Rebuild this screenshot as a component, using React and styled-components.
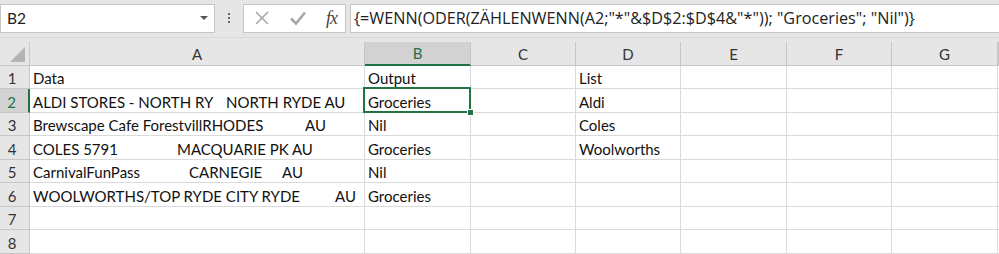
import React from "react";
import styled, { createGlobalStyle, css } from "styled-components";

const GlobalStyle = createGlobalStyle`
  body {
    margin: 0;
    background: #ffffff;
    font-family: Lato, "Open Sans", sans-serif;
  }
`;

const GREEN = "#217346";
const GRID = "#dadada";
const HEAD_LINE = "#c6c6c6";

const columns = [
  { name: "A", width: 335 },
  { name: "B", width: 106 },
  { name: "C", width: 105 },
  { name: "D", width: 105 },
  { name: "E", width: 106 },
  { name: "F", width: 105 },
  { name: "G", width: 106 },
];

// column A holds padded text, kept as segments with the width each one takes
const rows = [
  [[["Data"]], "Output", "", "List"],
  [[["ALDI STORES - NORTH RY", 193], ["NORTH RYDE AU"]], "Groceries", "", "Aldi"],
  [[["Brewscape Cafe ForestvillRHODES", 272], ["AU"]], "Nil", "", "Coles"],
  [[["COLES 5791", 144], ["MACQUARIE PK AU"]], "Groceries", "", "Woolworths"],
  [[["CarnivalFunPass", 156], ["CARNEGIE", 93], ["AU"]], "Nil", "", ""],
  [[["WOOLWORTHS/TOP RYDE CITY RYDE", 302], ["AU"]], "Groceries", "", ""],
  [[], "", "", ""],
  [[], "", "", ""],
];

const gridTemplate = `30px ${columns.map((c) => c.width + "px").join(" ")} 1fr`;

const Sheet = styled.div`
  width: 999px;
  height: 254px;
  overflow: hidden;
  background: #ffffff;
`;

const Toolbar = styled.div`
  display: flex;
  align-items: center;
  height: 36px;
  padding-bottom: 1px;
  background: #e6e6e6;
  border-bottom: 1px solid #d9d9d9;
`;

const NameBox = styled.div`
  box-sizing: border-box;
  display: flex;
  align-items: center;
  justify-content: space-between;
  width: 215px;
  height: 29px;
  padding: 0 6px 0 6px;
  background: #ffffff;
  border: 1px solid #c6c6c6;
  font-size: 15.5px;
  color: #222;
`;

const Caret = styled.span`
  width: 0;
  height: 0;
  border-left: 4px solid transparent;
  border-right: 4px solid transparent;
  border-top: 4px solid #555;
`;

const Dots = styled.div`
  display: flex;
  flex-direction: column;
  align-items: center;
  gap: 2px;
  width: 28px;

  span {
    width: 2px;
    height: 2px;
    background: #666;
  }
`;

const FxBox = styled.div`
  box-sizing: border-box;
  display: flex;
  align-items: center;
  justify-content: space-between;
  width: 103px;
  height: 29px;
  padding: 0 8px 0 10px;
  background: #ffffff;
  border: 1px solid #c6c6c6;
`;

const Fx = styled.span`
  font-family: "Liberation Serif", "DejaVu Serif", serif;
  font-style: italic;
  font-size: 18px;
  color: #444;
  letter-spacing: -1px;
`;

const FormulaBox = styled.div`
  box-sizing: border-box;
  flex: 1;
  display: flex;
  align-items: center;
  height: 29px;
  margin-left: 4px;
  padding-left: 3px;
  background: #ffffff;
  border: 1px solid #c6c6c6;
  border-right: none;
  font-family: "Open Sans", sans-serif;
  font-size: 16.2px;
  color: #222;
  white-space: pre;
`;

const HeaderBar = styled.div`
  display: grid;
  grid-template-columns: ${gridTemplate};
  padding-top: 4px;
  background: #e6e6e6;
`;

const Corner = styled.div`
  position: relative;
  height: 23px;
  border-right: 1px solid ${HEAD_LINE};
  border-bottom: 1px solid ${HEAD_LINE};

  &::after {
    content: "";
    position: absolute;
    right: 4px;
    bottom: 3px;
    width: 0;
    height: 0;
    border-left: 15px solid transparent;
    border-bottom: 15px solid #b4b4b4;
  }
`;

const ColHead = styled.div`
  box-sizing: border-box;
  display: flex;
  align-items: center;
  justify-content: center;
  height: 24px;
  font-size: 15px;
  color: #333;
  border-right: 1px solid ${HEAD_LINE};
  border-bottom: 1px solid ${HEAD_LINE};

  ${(p) =>
    p.$active &&
    css`
      background: #d2d2d2;
      color: ${GREEN};
      border-bottom: 2px solid ${GREEN};
    `}
`;

const Grid = styled.div`
  display: grid;
  grid-template-columns: ${gridTemplate};
  grid-auto-rows: 23.45px;
`;

const RowHead = styled.div`
  box-sizing: border-box;
  display: flex;
  align-items: flex-end;
  justify-content: center;
  padding: 0 5px 1px 0;
  background: #e6e6e6;
  font-size: 15px;
  color: #333;
  border-right: 1px solid ${HEAD_LINE};
  border-bottom: 1px solid ${HEAD_LINE};

  ${(p) =>
    p.$active &&
    css`
      background: #d2d2d2;
      color: ${GREEN};
      border-right: 2px solid ${GREEN};
    `}
`;

const Cell = styled.div`
  box-sizing: border-box;
  position: relative;
  display: flex;
  align-items: flex-end;
  padding: 0 0 1px 3px;
  font-size: 15px;
  color: #111;
  white-space: pre;
  border-right: 1px solid ${GRID};
  border-bottom: 1px solid ${GRID};

  ${(p) =>
    p.$selected &&
    css`
      &::before {
        content: "";
        position: absolute;
        left: -2px;
        top: -2px;
        right: -1px;
        bottom: -1px;
        border: 2px solid ${GREEN};
      }
      &::after {
        content: "";
        position: absolute;
        right: -4px;
        bottom: -4px;
        width: 5px;
        height: 5px;
        background: ${GREEN};
        border: 1px solid #ffffff;
        z-index: 2;
      }
    `}
`;

const Segment = styled.span`
  flex: none;
  width: ${(p) => (p.$width ? p.$width + "px" : "auto")};
`;

export default function App() {
  return (
    <Sheet>
      <GlobalStyle />
      <Toolbar>
        <NameBox>
          B2
          <Caret />
        </NameBox>
        <Dots>
          <span />
          <span />
          <span />
        </Dots>
        <FxBox>
          <svg width="16" height="16" viewBox="0 0 16 16">
            <path d="M2 2 L14 14 M14 2 L2 14" stroke="#a8a8a8" strokeWidth="1.6" fill="none" />
          </svg>
          <svg width="18" height="16" viewBox="0 0 18 16">
            <path d="M2 8.5 L7 13.5 L16 2.5" stroke="#a8a8a8" strokeWidth="2.6" fill="none" />
          </svg>
          <Fx>fx</Fx>
        </FxBox>
        <FormulaBox>
          {'{=WENN(ODER(ZÄHLENWENN(A2;"*"&$D$2:$D$4&"*")); "Groceries"; "Nil")}'}
        </FormulaBox>
      </Toolbar>
      <HeaderBar>
        <Corner />
        {columns.map((c) => (
          <ColHead key={c.name} $active={c.name === "B"}>
            {c.name}
          </ColHead>
        ))}
        <ColHead />
      </HeaderBar>
      <Grid>
        {rows.map((r, i) => (
          <React.Fragment key={i}>
            <RowHead $active={i === 1}>{i + 1}</RowHead>
            {columns.map((c, j) => (
              <Cell key={c.name} $selected={i === 1 && j === 1}>
                {j === 0
                  ? r[0].map(([text, width]) => (
                      <Segment key={text} $width={width}>
                        {text}
                      </Segment>
                    ))
                  : r[j] || ""}
              </Cell>
            ))}
            <Cell />
          </React.Fragment>
        ))}
      </Grid>
    </Sheet>
  );
}
